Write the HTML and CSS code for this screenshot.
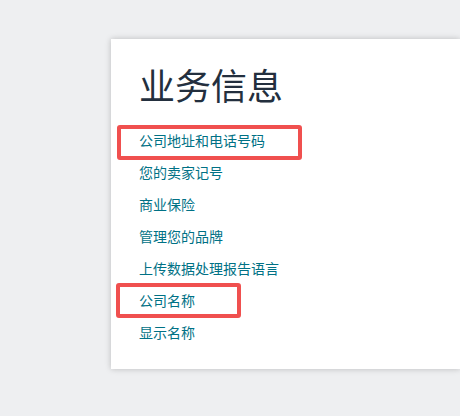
FILE: index.html
```html
<!DOCTYPE html>
<html lang="zh-CN">
<head>
<meta charset="utf-8">
<title>业务信息</title>
<link rel="stylesheet" href="styles.css">
</head>
<body>
<div class="page">
  <section class="card">
    <h1 class="title">业务信息</h1>
    <ul class="links">
      <li class="item hl hl-1"><a href="#">公司地址和电话号码</a></li>
      <li class="item"><a href="#">您的卖家记号</a></li>
      <li class="item"><a href="#">商业保险</a></li>
      <li class="item"><a href="#">管理您的品牌</a></li>
      <li class="item"><a href="#">上传数据处理报告语言</a></li>
      <li class="item hl hl-2"><a href="#">公司名称</a></li>
      <li class="item"><a href="#">显示名称</a></li>
    </ul>
  </section>
</div>
</body>
</html>
```

FILE: styles.css
```css
html, body {
  margin: 0;
  padding: 0;
  overflow: hidden;
  background: #eeeff1;
  font-family: "Noto Sans CJK SC", "Noto Sans", sans-serif;
}

.page {
  width: 460px;
  height: 416px;
  padding: 39px 0 0 111px;
  box-sizing: border-box;
  overflow: hidden;
}

.card {
  width: 349px;
  height: 330px;
  background: #ffffff;
  box-shadow: 0 0 6px rgba(0, 0, 0, 0.22);
  padding: 23px 0 0 28px;
  box-sizing: border-box;
}

.title {
  margin: 0;
  font-size: 36px;
  line-height: 44px;
  font-weight: 400;
  color: #232f3e;
}

.links {
  list-style: none;
  margin: 18px 0 0 0;
  padding: 0;
}

.item {
  height: 32px;
  line-height: 32px;
  font-size: 14px;
  position: relative;
}

.item a {
  color: #007185;
  text-decoration: none;
}

.hl::before {
  content: "";
  position: absolute;
  border: 4px solid #f0504f;
  border-radius: 3px;
  box-sizing: border-box;
  height: 35px;
}

.hl-1::before {
  left: -22px;
  top: 1px;
  width: 185px;
}

.hl-2::before {
  left: -23px;
  top: -1px;
  width: 125px;
}
```
